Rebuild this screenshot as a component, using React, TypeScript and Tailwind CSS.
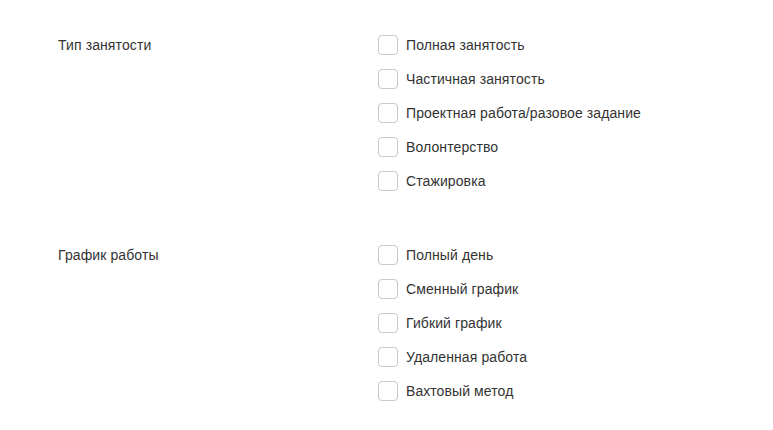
import React from 'react'

const groups = [
  {
    title: 'Тип занятости',
    items: ['Полная занятость', 'Частичная занятость', 'Проектная работа/разовое задание', 'Волонтерство', 'Стажировка'],
  },
  {
    title: 'График работы',
    items: ['Полный день', 'Сменный график', 'Гибкий график', 'Удаленная работа', 'Вахтовый метод'],
  },
]

export default function App() {
  return (
    <div className="min-h-[430px] w-[773px] bg-white pt-[35px] pl-[58px] text-[14px] tracking-[0.1px] text-[#333] font-['Liberation_Sans',Arial,sans-serif] flex flex-col gap-[54px]">
      {groups.map(g => (
        <div key={g.title} className="flex">
          <div className="w-[320px] h-[20px] leading-[20px]">{g.title}</div>
          <div className="flex flex-col gap-[14px]">
            {g.items.map(it => (
              <label key={it} className="flex items-center h-[20px] leading-[20px]">
                <span className="w-[20px] h-[20px] rounded-[4px] border border-[#c8c8c8] bg-white mr-[8px]" />
                <span>{it}</span>
              </label>
            ))}
          </div>
        </div>
      ))}
    </div>
  )
}
